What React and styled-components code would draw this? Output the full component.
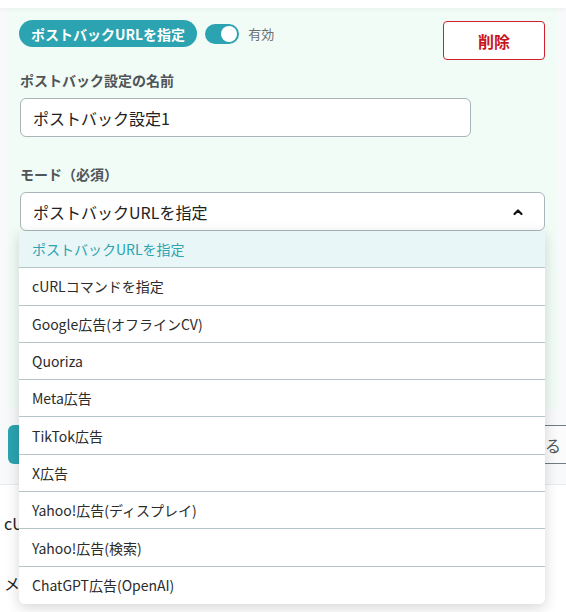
import React, { useState } from 'react'
import styled, { createGlobalStyle } from 'styled-components'

const GlobalStyle = createGlobalStyle`
  html, body {
    margin: 0;
    padding: 0;
    background: #ffffff;
    overflow: hidden;
    font-family: "Noto Sans CJK JP", "Noto Sans", sans-serif;
    color: #222;
  }
  * { box-sizing: border-box; }
`

const modes = [
  'ポストバックURLを指定',
  'cURLコマンドを指定',
  'Google広告(オフラインCV)',
  'Quoriza',
  'Meta広告',
  'TikTok広告',
  'X広告',
  'Yahoo!広告(ディスプレイ)',
  'Yahoo!広告(検索)',
  'ChatGPT広告(OpenAI)',
]

const ChevronUp = () => (
  <svg width="12" height="12" viewBox="0 0 12 12" fill="none">
    <path d="M2.5 8 L6 4.5 L9.5 8" stroke="#111" strokeWidth="2.2" strokeLinecap="round" strokeLinejoin="round" />
  </svg>
)

export default function App() {
  const [enabled, setEnabled] = useState(true)
  const [mode, setMode] = useState(modes[0])

  return (
    <Page>
      <GlobalStyle />
      <TopBar />
      <Section>
        <Card>
          <Header>
            <Badge>ポストバックURLを指定</Badge>
            <Toggle $on={enabled} onClick={() => setEnabled(!enabled)}>
              <Knob $on={enabled} />
            </Toggle>
            <ToggleLabel>有効</ToggleLabel>
            <DeleteButton>削除</DeleteButton>
          </Header>

          <Label>ポストバック設定の名前</Label>
          <TextInput defaultValue="ポストバック設定1" />

          <Label $gap>モード（必須）</Label>
          <SelectWrap>
            <SelectBox>
              <span>{mode}</span>
              <ChevronUp />
            </SelectBox>
            <Menu>
              {modes.map((m) => (
                <MenuItem key={m} $active={m === mode} onClick={() => setMode(m)}>
                  {m}
                </MenuItem>
              ))}
            </Menu>
          </SelectWrap>
          <Spacer />
        </Card>

        <ButtonRow>
          <PrimaryButton>保存</PrimaryButton>
          <OutlineButton>設定を追加する</OutlineButton>
        </ButtonRow>
      </Section>

      <Content>
        <Line>cURLコマンド</Line>
        <Line>メモ</Line>
      </Content>
    </Page>
  )
}

const Page = styled.div`
  width: 566px;
  min-height: 612px;
`

const TopBar = styled.div`
  height: 8px;
  background: #fff;
  box-shadow: 0 1px 4px rgba(0, 0, 0, 0.05);
  position: relative;
`

const Section = styled.div`
  background: #f7f9fa;
  padding: 0 9px 20px 8px;
  border-bottom: 1px solid #e8ecee;
`

const Card = styled.div`
  background: #f2fcf7;
  padding: 12px 12px 0 12px;
`

const Header = styled.div`
  display: flex;
  align-items: flex-start;
  height: 40px;
`

const Badge = styled.div`
  height: 27px;
  margin-left: -1px;
  display: flex;
  align-items: center;
  padding: 0 12px;
  border-radius: 14px;
  background: #2ba3b0;
  color: #fff;
  font-size: 14px;
  font-weight: 700;
  white-space: nowrap;
`

const Toggle = styled.div`
  width: 34px;
  height: 20px;
  margin: 4px 0 0 8px;
  border-radius: 10px;
  background: ${(p) => (p.$on ? '#2ba3b0' : '#c9d1d3')};
  display: flex;
  align-items: center;
  padding: 0 2px;
  justify-content: ${(p) => (p.$on ? 'flex-end' : 'flex-start')};
  cursor: pointer;
`

const Knob = styled.div`
  width: 16px;
  height: 16px;
  border-radius: 50%;
  background: #fff;
`

const ToggleLabel = styled.span`
  margin: 5px 0 0 9px;
  font-size: 13px;
  line-height: 18px;
  color: #6b6f72;
`

const DeleteButton = styled.button`
  margin: 1px 0 0 auto;
  width: 102px;
  height: 39px;
  border: 1px solid #d0202e;
  border-radius: 4px;
  background: #fff;
  color: #c8161f;
  font-family: inherit;
  font-size: 16px;
  font-weight: 700;
  cursor: pointer;
`

const Label = styled.div`
  margin-top: ${(p) => (p.$gap ? '27px' : '10px')};
  font-size: 14px;
  line-height: 20px;
  font-weight: 700;
  color: #4f5558;
`

const TextInput = styled.input`
  display: block;
  margin-top: 8px;
  width: 451px;
  height: 39px;
  border: 1px solid #a9b5b8;
  border-radius: 6px;
  background: #fff;
  padding: 0 12px;
  font-family: inherit;
  font-size: 16px;
  color: #222;
  outline: none;
`

const SelectWrap = styled.div`
  position: relative;
  margin-top: 8px;
`

const SelectBox = styled.div`
  height: 39px;
  border: 1px solid #a9b5b8;
  border-radius: 6px;
  background: #fff;
  display: flex;
  align-items: center;
  justify-content: space-between;
  padding: 0 20px 0 12px;
  font-size: 16px;
  color: #222;
`

const Menu = styled.div`
  position: absolute;
  top: 100%;
  left: -1px;
  right: 0;
  z-index: 10;
  background: #fff;
  border-radius: 0 0 6px 6px;
  box-shadow: 0 4px 14px rgba(0, 0, 0, 0.16);
  overflow: hidden;
`

const MenuItem = styled.div`
  height: 37.3px;
  display: flex;
  align-items: center;
  padding-left: 13px;
  font-size: 14px;
  color: ${(p) => (p.$active ? '#2ba3b0' : '#2b2b2b')};
  background: ${(p) => (p.$active ? '#e8f6f7' : '#fff')};
  border-bottom: 1px solid #b5c6c8;
  cursor: pointer;

  &:last-child {
    border-bottom: none;
  }
`

const Spacer = styled.div`
  height: 178px;
`

const ButtonRow = styled.div`
  display: flex;
  justify-content: space-between;
  align-items: center;
  margin-top: 16px;
`

const PrimaryButton = styled.button`
  height: 39px;
  width: 120px;
  border: none;
  border-radius: 6px;
  background: #2ba3b0;
  color: #fff;
  font-family: inherit;
  font-size: 16px;
  font-weight: 700;
`

const OutlineButton = styled.button`
  height: 39px;
  margin-right: -21px;
  padding: 0 16px;
  border: 1px solid #6e7d80;
  border-radius: 6px;
  background: #fbfbfb;
  color: #4f5a5d;
  font-family: inherit;
  font-size: 16px;
  white-space: nowrap;
`

const Content = styled.div`
  padding: 26px 0 0 4px;
`

const Line = styled.div`
  font-size: 16px;
  line-height: 24px;
  color: #222;
  margin-bottom: 36px;
`
